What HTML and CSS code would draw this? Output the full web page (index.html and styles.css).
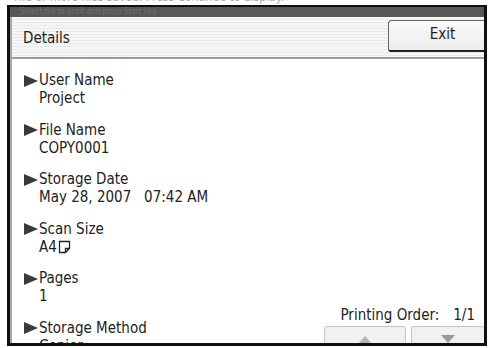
FILE: index.html
```html
<!doctype html>
<html lang="en">
  <head>
    <meta charset="utf-8" />
    <title>Details</title>
    <link rel="stylesheet" href="styles.css">
  </head>
  <body>
    <div class="top-strip"><span>File or more files saved. Press Continue to display.</span></div>
    <div class="screen">
      <div class="title-bar"><span>Select file to print and press Start key.</span></div>
      <div class="panel">
        <div class="header">
          <div class="header-title">Details</div>
          <button class="exit-btn">Exit</button>
        </div>
        <div class="content">
          <div class="list">
            <div class="item">
              <div class="label"><svg class="arrow" width="14" height="12" viewBox="0 0 14 12"><polygon points="0,0 14,6 0,12" /></svg>User Name</div>
              <div class="value">Project</div>
            </div>
            <div class="item">
              <div class="label"><svg class="arrow" width="14" height="12" viewBox="0 0 14 12"><polygon points="0,0 14,6 0,12" /></svg>File Name</div>
              <div class="value">COPY0001</div>
            </div>
            <div class="item">
              <div class="label"><svg class="arrow" width="14" height="12" viewBox="0 0 14 12"><polygon points="0,0 14,6 0,12" /></svg>Storage Date</div>
              <div class="value">May 28, 2007&nbsp;&nbsp;&nbsp;07:42 AM</div>
            </div>
            <div class="item">
              <div class="label"><svg class="arrow" width="14" height="12" viewBox="0 0 14 12"><polygon points="0,0 14,6 0,12" /></svg>Scan Size</div>
              <div class="value">A4<svg class="paper" width="13" height="14" viewBox="0 0 13 14"><path d="M1.5 1.5 H11.5 V8.5 L7.5 12.5 H1.5 Z M11.5 8.5 H7.5 V12.5" fill="none" stroke="#222" stroke-width="1.3" /></svg></div>
            </div>
            <div class="item">
              <div class="label"><svg class="arrow" width="14" height="12" viewBox="0 0 14 12"><polygon points="0,0 14,6 0,12" /></svg>Pages</div>
              <div class="value">1</div>
            </div>
            <div class="item">
              <div class="label"><svg class="arrow" width="14" height="12" viewBox="0 0 14 12"><polygon points="0,0 14,6 0,12" /></svg>Storage Method</div>
              <div class="value">Copier</div>
            </div>
          </div>
          <div class="order">
            <div class="order-text">Printing Order:<span class="order-num">1/1</span></div>
            <div class="order-buttons">
              <button class="scroll-btn up"><span class="tri-up"></span></button>
              <button class="scroll-btn down"><span class="tri-down"></span></button>
            </div>
          </div>
        </div>
      </div>
    </div>
  </body>
</html>
```

FILE: styles.css
```css
html,
body {
  margin: 0;
  padding: 0;
  background: #fff;
}
body {
  width: 490px;
  height: 348px;
  overflow: hidden;
  font-family: "DejaVu Sans Condensed", "Liberation Sans", sans-serif;
  font-size: 15px;
  line-height: 18px;
  color: #222;
}
.top-strip {
  height: 5px;
  overflow: hidden;
  padding-left: 14px;
  color: #aaa;
  font-size: 12px;
}
.top-strip span {
  display: block;
  margin-top: -12px;
}
.screen {
  box-sizing: border-box;
  width: 480px;
  height: 341px;
  margin-left: 7px;
  border: 3px solid #111;
  border-top-width: 2px;
  display: flex;
  flex-direction: column;
  overflow: hidden;
}
.title-bar {
  height: 10px;
  background: #575757;
  color: #6e6e6e;
  font-size: 8px;
  line-height: 10px;
  padding-left: 10px;
  overflow: hidden;
  flex: none;
}
.panel {
  flex: 1;
  display: flex;
  flex-direction: column;
  border-left: 2px solid #aaa;
  min-height: 0;
}
.header {
  height: 40px;
  flex: none;
  display: flex;
  align-items: flex-start;
  border-bottom: 2px solid #9c9c9c;
  background: repeating-linear-gradient(to bottom, #f6f6f6 0, #f6f6f6 2px, #e9e9e9 2px, #e9e9e9 3px);
}
.header-title {
  padding: 12px 0 0 11px;
}
.exit-btn {
  margin: 3px 0 0 auto;
  width: 96px;
  height: 32px;
  box-sizing: border-box;
  border: 1px solid #666;
  border-right: none;
  border-bottom: 2px solid #222;
  border-radius: 4px 0 0 3px;
  background: linear-gradient(#fafafa, #ececec);
  font: inherit;
  color: #222;
  padding: 0 0 4px 12px;
}
.content {
  flex: 1;
  display: flex;
  min-height: 0;
}
.list {
  padding: 12px 0 0 12px;
}
.item {
  margin-bottom: 13.6px;
}
.label {
  display: flex;
  align-items: center;
  white-space: nowrap;
}
.arrow {
  fill: #3a3a3a;
  margin: 1px 1px 0 0;
}
.value {
  padding-left: 15px;
  white-space: nowrap;
  display: flex;
  align-items: center;
}
.paper {
  margin-left: 1px;
}
.order {
  margin-left: auto;
  display: flex;
  flex-direction: column;
  justify-content: flex-end;
}
.order-text {
  text-align: right;
  padding-right: 9px;
  white-space: nowrap;
}
.order-num {
  margin-left: 14px;
}
.order-buttons {
  display: flex;
  gap: 5px;
  margin-top: 2px;
  height: 17px;
}
.scroll-btn {
  box-sizing: border-box;
  height: 30px;
  border: 1px solid #c4c4c4;
  border-radius: 3px 3px 0 0;
  background: #f1f1f1;
  padding: 0;
  display: flex;
  justify-content: center;
  align-items: flex-start;
}
.scroll-btn.up {
  width: 82px;
}
.scroll-btn.down {
  width: 73px;
  border-right: none;
}
.tri-up {
  margin-top: 9px;
  width: 0;
  height: 0;
  border-left: 7px solid transparent;
  border-right: 7px solid transparent;
  border-bottom: 8px solid #b5b5b5;
}
.tri-down {
  margin-top: 8px;
  width: 0;
  height: 0;
  border-left: 7px solid transparent;
  border-right: 7px solid transparent;
  border-top: 8px solid #9a9a9a;
}
```
